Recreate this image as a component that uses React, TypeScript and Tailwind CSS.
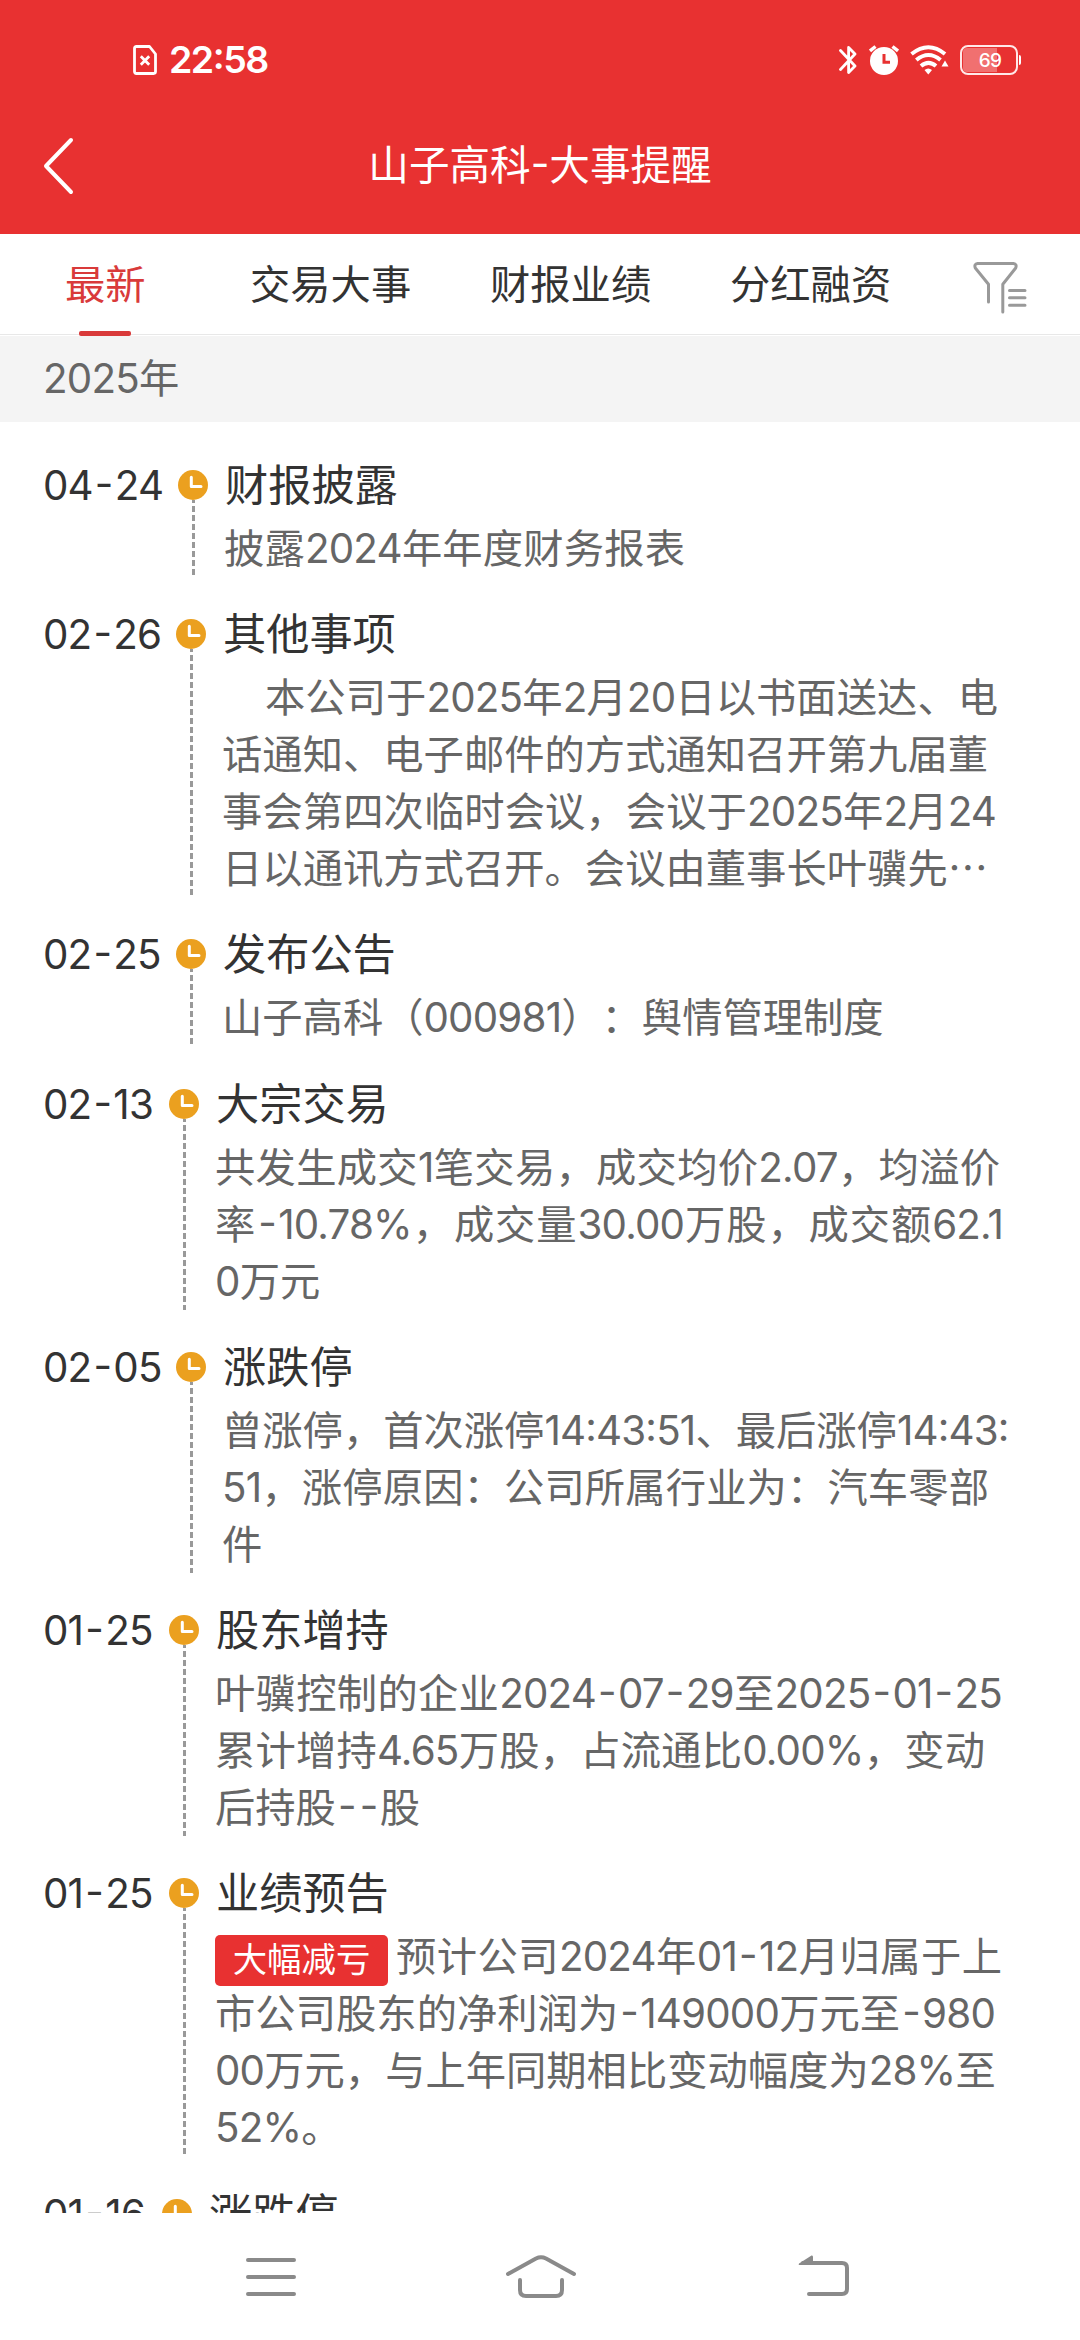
import { Fragment } from "react";

type EventItem = {
  date: string;
  dateClass: string;
  title: string;
  tag?: string;
  lines: { text: string; width?: string }[];
  extra?: string;
};

const tabs = ["交易大事", "财报业绩", "分红融资"];

const events: EventItem[] = [
  {
    date: "04-24",
    dateClass: "w-[134px]",
    title: "财报披露",
    lines: [{ text: "披露2024年年度财务报表", width: "w-[461px]" }],
  },
  {
    date: "02-26",
    dateClass: "w-[132px]",
    title: "其他事项",
    lines: [
      { text: "本公司于2025年2月20日以书面送达、电", width: "w-[776px] pl-[43px]" },
      { text: "话通知、电子邮件的方式通知召开第九届董", width: "w-[766px]" },
      { text: "事会第四次临时会议，会议于2025年2月24", width: "w-[774px]" },
      { text: "日以通讯方式召开。会议由董事长叶骥先…", width: "w-[766px]" },
    ],
  },
  {
    date: "02-25",
    dateClass: "w-[132px]",
    title: "发布公告",
    lines: [{ text: "山子高科（000981）：舆情管理制度", width: "w-[661px]" }],
    extra: "pb-[43px]",
  },
  {
    date: "02-13",
    dateClass: "w-[125px]",
    title: "大宗交易",
    lines: [
      { text: "共发生成交1笔交易，成交均价2.07，均溢价", width: "w-[785px]" },
      { text: "率-10.78%，成交量30.00万股，成交额62.1", width: "w-[788px]" },
      { text: "0万元" },
    ],
  },
  {
    date: "02-05",
    dateClass: "w-[132px]",
    title: "涨跌停",
    lines: [
      { text: "曾涨停，首次涨停14:43:51、最后涨停14:43:", width: "w-[785px]" },
      { text: "51，涨停原因：公司所属行业为：汽车零部", width: "w-[767px]" },
      { text: "件" },
    ],
  },
  {
    date: "01-25",
    dateClass: "w-[125px]",
    title: "股东增持",
    lines: [
      { text: "叶骥控制的企业2024-07-29至2025-01-25", width: "w-[787px]" },
      { text: "累计增持4.65万股，占流通比0.00%，变动", width: "w-[770px]" },
      { text: "后持股--股" },
    ],
  },
  {
    date: "01-25",
    dateClass: "w-[125px]",
    title: "业绩预告",
    tag: "大幅减亏",
    lines: [
      { text: "预计公司2024年01-12月归属于上", width: "w-[606px]" },
      { text: "市公司股东的净利润为-149000万元至-980", width: "w-[780px]" },
      { text: "00万元，与上年同期相比变动幅度为28%至", width: "w-[778px]" },
      { text: "52%。" },
    ],
    extra: "pb-[43px]",
  },
  {
    date: "01-16",
    dateClass: "w-[118px]",
    title: "涨跌停",
    lines: [{ text: "曾涨停" }],
  },
];

// digits are set a bit tighter than the Chinese text, hyphens get a little air
const Txt = ({ text }: { text: string }) => (
  <>
    {text.split(/([\d.:%]+|-|…)/).map((part, i) => {
      if (part === "-")
        return (
          <span key={i} className="mx-[2px] tracking-[-0.6px]">
            -
          </span>
        );
      if (part === "…")
        return (
          <span key={i} className="font-['Noto_Sans_CJK_SC',sans-serif] leading-none">
            …
          </span>
        );
      if (/\d/.test(part))
        return (
          <span key={i} className="tracking-[-0.8px]">
            {part}
          </span>
        );
      return <Fragment key={i}>{part}</Fragment>;
    })}
  </>
);

const StatusBar = () => (
  <div className="flex h-[98px] items-center pt-[22px] pl-[133px] pr-[59px]">
    <svg width="24" height="30" viewBox="0 0 24 30" fill="none" stroke="#fff" strokeWidth="2.8">
      <path d="M1.5 3.4Q1.5 1.5 3.4 1.5H16.5L22.5 9V26.6Q22.5 28.5 20.6 28.5H3.4Q1.5 28.5 1.5 26.6Z" strokeLinejoin="round" />
      <path d="M7.8 11.2L16.2 19.8M16.2 11.2L7.8 19.8" />
    </svg>
    <span className="ml-[12px] text-[37.5px] leading-none font-semibold tracking-[-1.5px] text-white">22:58</span>
    <div className="ml-auto flex items-center">
      <svg width="18" height="30" viewBox="0 0 18 30" fill="none" stroke="#fff" strokeWidth="2.8">
        <path d="M1.5 5.5L16 21L9.6 27.5V2.5L16 9L1.5 24.5" strokeLinejoin="round" strokeLinecap="round" />
      </svg>
      <svg className="ml-[12px]" width="30" height="30" viewBox="0 0 30 30">
        <circle cx="15" cy="16" r="14" fill="#fff" />
        <path d="M1 6L6.5 1.5M29 6L23.5 1.5" stroke="#fff" strokeWidth="3.4" />
        <path d="M15 9V17.3H21" stroke="#e83131" strokeWidth="3" fill="none" />
      </svg>
      <svg className="ml-[11px]" width="39" height="30" viewBox="0 0 39 30" fill="none">
        <path d="M1.5 9Q18.5 -4.5 35 9" stroke="#fff" strokeWidth="4" />
        <path d="M6.3 15Q18.5 5 30.5 15" stroke="#fff" strokeWidth="4" />
        <path d="M11 21Q18.5 14.6 26 21" stroke="#fff" strokeWidth="4" />
        <path d="M14.5 25Q18.3 22 22 25L18.3 29.5Z" fill="#fff" />
        <path d="M31.5 21.5L35 15.5L38.5 21.5Z" fill="#fff" />
      </svg>
      <div className="relative ml-[11px] flex h-[30px] w-[58px] items-center justify-center rounded-[8px] border-[2.5px] border-[#ffe9e9] pl-[2px]">
        <span className="absolute top-[1px] bottom-[1px] left-[1px] w-[34px] rounded-l-[4px] bg-[#f17070]" />
        <span className="relative text-[19px] leading-none font-medium tracking-[-0.8px] text-white">69</span>
      </div>
      <span className="ml-px h-[10px] w-[2px] rounded-r bg-white" />
    </div>
  </div>
);

const ClockIcon = () => (
  <svg width="30" height="30" viewBox="0 0 30 30" className="shrink-0">
    <circle cx="15" cy="15" r="15" fill="#eba01f" />
    <path d="M13.3 7.3V16.5H23" stroke="#fff" strokeWidth="3" strokeLinecap="round" strokeLinejoin="round" fill="none" />
  </svg>
);

const FilterIcon = () => (
  <svg width="54" height="52" viewBox="0 0 54 52" fill="none" stroke="#999" strokeWidth="3" strokeLinecap="round" strokeLinejoin="round">
    <path d="M15.5 40V22.2L2.3 6Q0.8 2 4.6 1.5H40.4Q44.2 2 42.7 6L29.8 22.2V50" />
    <path d="M36.5 28.5H52M36.5 35.8H52M36.5 43.2H52" />
  </svg>
);

const EventRow = ({ item }: { item: EventItem }) => (
  <div className="flex shrink-0">
    <div className={`shrink-0 pt-px indent-[-1px] text-[40.3px] leading-[30px] whitespace-nowrap text-[#333] ${item.dateClass}`}>
      <Txt text={item.date} />
    </div>
    <div className="flex w-[30px] shrink-0 flex-col items-center pb-[42px]">
      <ClockIcon />
      <div className="w-[3px] flex-1 bg-[repeating-linear-gradient(to_bottom,#999_0_3px,transparent_3px_6px,#999_6px_9px)]" />
    </div>
    <div className={`ml-[17px] ${item.extra ?? "pb-[42px]"}`}>
      <h2 className="text-[43.2px] leading-[30px] whitespace-nowrap text-[#333]">{item.title}</h2>
      <div className="mt-[20px] -ml-px text-[40.3px] leading-[57px] text-[#666]">
        {item.lines.map((line, i) => (
          <div key={i} className="flex h-[57px] items-center whitespace-nowrap">
            {i === 0 && item.tag && (
              <span className="mt-[7px] mr-[8px] flex h-[51px] w-[173px] shrink-0 items-center justify-center rounded-[5px] bg-[#e83131] pb-[2px] text-[34.4px] text-white">
                {item.tag}
              </span>
            )}
            <p className={`[text-align-last:justify] ${line.width ?? ""}`}>
              <Txt text={line.text} />
            </p>
          </div>
        ))}
      </div>
    </div>
  </div>
);

const NavBar = () => (
  <div className="flex h-[127px] items-start bg-white pt-[40px] pl-[244px]">
    <svg width="54" height="48" viewBox="0 0 54 48" stroke="#8a8a8a" strokeWidth="4" strokeLinecap="round">
      <path d="M4 7H50M4 24H50M4 41H50" />
    </svg>
    <svg className="ml-[206px]" width="74" height="48" viewBox="0 0 74 48" fill="none" stroke="#8a8a8a" strokeWidth="4" strokeLinecap="round" strokeLinejoin="round">
      <path d="M4 21L32 5.5Q37 3 42 5.5L70 21" />
      <path d="M16 27V37Q16 43 22 43H52Q58 43 58 37V27" />
    </svg>
    <svg className="ml-[219px]" width="56" height="48" viewBox="0 0 56 48" fill="none" stroke="#8a8a8a" strokeWidth="4" strokeLinecap="round">
      <path d="M6 10H45Q50 10 50 15V36Q50 41 45 41H12" />
      <path d="M2 10.5L14.5 2.5Q16 2 16 4V12H3Q1 12 2 10.5Z" fill="#8a8a8a" stroke="none" />
    </svg>
  </div>
);

const App = () => {
  return (
    <div className="flex h-[2340px] w-[1080px] flex-col overflow-hidden bg-white font-['Inter','Noto_Sans_CJK_SC',sans-serif] [font-feature-settings:'case'] [text-spacing-trim:space-all]">
      <header className="h-[234px] shrink-0 bg-[#e83131]">
        <StatusBar />
        <div className="flex h-[136px] items-center pl-[43px]">
          <svg width="31" height="58" viewBox="0 0 31 58" fill="none" stroke="#fff" strokeWidth="4" strokeLinecap="round" strokeLinejoin="round">
            <path d="M28 3L3 29L28 55" />
          </svg>
          <h1 className="mr-[74px] flex-1 text-center text-[40.6px] leading-none text-white">山子高科-大事提醒</h1>
        </div>
      </header>

      <nav className="flex h-[102px] shrink-0 pl-[65px] text-[40.3px] leading-[102px] text-[#333]">
        <div className="relative h-[102px] w-[81px] text-[#d93a3a]">
          最新
          <span className="absolute bottom-0 left-[14px] h-[5px] w-[52px] rounded-[2px] bg-[#d93a3a]" />
        </div>
        <div className="-ml-[146px] flex h-[101px] w-[1080px] border-b border-[#e8e8e8] pl-[250px]">
          {tabs.map((tab) => (
            <span key={tab} className="w-[240px]">
              {tab}
            </span>
          ))}
          <span className="mt-[28px] ml-[3px]">
            <FilterIcon />
          </span>
        </div>
      </nav>

      <div className="h-[86px] shrink-0 bg-[#f4f4f4] pl-[43px] text-[40.3px] leading-[86px] text-[#666]">
        <Txt text="2025年" />
      </div>

      <main className="flex h-[1791px] shrink-0 flex-col overflow-hidden pt-[48px] pl-[44px]">
        {events.map((item, i) => (
          <EventRow key={i} item={item} />
        ))}
      </main>

      <NavBar />
    </div>
  );
};

export default App;
